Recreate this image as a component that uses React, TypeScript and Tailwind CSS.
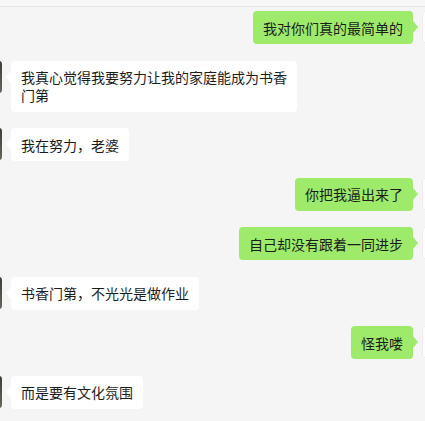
type Message = {
    id: number,
    mine: boolean,
    text: string
}

const messages: Message[] = [
    { id: 1, mine: true, text: "我对你们真的最简单的" },
    { id: 2, mine: false, text: "我真心觉得我要努力让我的家庭能成为书香门第" },
    { id: 3, mine: false, text: "我在努力，老婆" },
    { id: 4, mine: true, text: "你把我逼出来了" },
    { id: 5, mine: true, text: "自己却没有跟着一同进步" },
    { id: 6, mine: false, text: "书香门第，不光光是做作业" },
    { id: 7, mine: true, text: "怪我喽" },
    { id: 8, mine: false, text: "而是要有文化氛围" },
]

function Bubble(props: { message: Message }) {
    const { message } = props;

    if (message.mine) {
        return (
            <div className="flex justify-end items-start gap-[9px]">
                <div className="relative max-w-[286px] rounded-[4px] bg-[#9eea6a] px-[10px] py-[7.5px] text-[14px] leading-[18px] text-[#1c1c1c]">
                    {message.text}
                    <span className="absolute right-[-5px] top-[10px] h-0 w-0 border-y-[6px] border-y-transparent border-l-[5px] border-l-[#9eea6a]" />
                </div>
                <div className="h-[32px] w-[34px] shrink-0 mr-[-31px] rounded-[3px] bg-[#fdfdfd] border border-[#ececec]" />
            </div>
        )
    }

    return (
        <div className="flex justify-start items-start gap-[9px]">
            <div className="h-[32px] w-[34px] shrink-0 ml-[-32px] rounded-[3px] bg-gradient-to-b from-[#3d3c35] to-[#6a675e]" />
            <div className="relative max-w-[286px] rounded-[4px] bg-white px-[10px] py-[7.5px] text-[14px] leading-[18px] text-[#1c1c1c]">
                {message.text}
                <span className="absolute left-[-5px] top-[10px] h-0 w-0 border-y-[6px] border-y-transparent border-r-[5px] border-r-white" />
            </div>
        </div>
    )
}

export default function App() {
    return (
        <div className="h-[421px] w-full overflow-hidden bg-[#f5f5f5]" style={{ fontFamily: '"Noto Sans CJK SC", "Noto Sans", sans-serif' }}>
            <div className="h-[7px] bg-[#f8f8f8] border-b border-[#e6e6e6]" />
            <div className="flex flex-col gap-[16.5px] pt-[4px]">
                {messages.map((message) => (
                    <Bubble key={message.id} message={message} />
                ))}
            </div>
        </div>
    )
}
